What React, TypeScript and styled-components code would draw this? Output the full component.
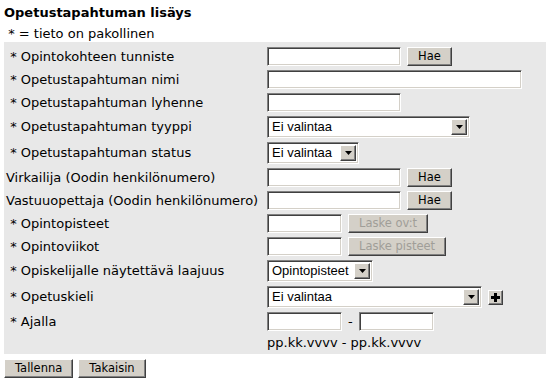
import React from 'react'
import styled, { createGlobalStyle, css } from 'styled-components'

const GlobalStyle = createGlobalStyle`
  html, body {
    margin: 0;
    padding: 0;
    background: #ffffff;
  }
  body {
    font-family: 'DejaVu Sans', Verdana, sans-serif;
    font-size: 13px;
    color: #000000;
  }
`

const inset = css`
  border: 1px solid;
  border-color: #808080 #ffffff #ffffff #808080;
  box-shadow: inset 1px 1px 0 #404040, inset -1px -1px 0 #d4d0c8;
`

const outset = css`
  border: 1px solid;
  border-color: #ffffff #404040 #404040 #ffffff;
  box-shadow: inset -1px -1px 0 #808080;
`

const Page = styled.div`
  padding: 4px 0 0 4px;
`

const Title = styled.h1`
  margin: 0;
  font-size: 13px;
  font-weight: bold;
  line-height: 18px;
`

const Note = styled.p`
  margin: 0;
  padding-top: 4px;
  line-height: 16px;
`

const Panel = styled.div`
  background: #e8e8e8;
  padding: 3px 0 1px 0;
  display: grid;
  grid-template-columns: 261px 1fr;
  align-items: center;
`

const Label = styled.div`
  padding: 2px;
  line-height: 16px;
  white-space: nowrap;
`

const Field = styled.div`
  padding: 2px;
  display: flex;
  align-items: center;
  gap: 6px;
  line-height: 16px;
`

const TextInput = styled.input<{ $w: number }>`
  ${inset};
  box-sizing: border-box;
  width: ${({ $w }) => $w}px;
  height: 19px;
  margin: 0;
  padding: 1px 3px;
  background: #ffffff;
  font-family: 'Liberation Sans', Arial, sans-serif;
  font-size: 13px;
  outline: none;
`

const Button = styled.button`
  ${outset};
  box-sizing: border-box;
  height: 19px;
  margin: 0;
  padding: 0 10px;
  background: #d4d0c8;
  font-family: 'DejaVu Sans', Verdana, sans-serif;
  font-size: 11.5px;
  color: #000000;
  line-height: 15px;

  &:disabled {
    color: #a09e98;
  }
`

const SelectBox = styled.div<{ $w: number }>`
  ${inset};
  box-sizing: border-box;
  width: ${({ $w }) => $w}px;
  height: 22px;
  padding: 2px;
  background: #ffffff;
  display: flex;
  align-items: stretch;
  font-family: 'Liberation Sans', Arial, sans-serif;
  font-size: 13px;
`

const SelectValue = styled.span`
  flex: 1;
  padding-left: 2px;
  line-height: 16px;
  white-space: nowrap;
  overflow: hidden;
`

const SelectArrow = styled.span`
  ${outset};
  box-sizing: border-box;
  width: 16px;
  background: #d4d0c8;
  display: flex;
  align-items: center;
  justify-content: center;
`

const PlusButton = styled.span`
  ${outset};
  box-sizing: border-box;
  width: 15px;
  height: 15px;
  background: #d4d0c8;
  display: flex;
  align-items: center;
  justify-content: center;
`

const Hint = styled.span`
  line-height: 16px;
`

const Actions = styled.div`
  display: flex;
  gap: 5px;
  margin-top: 5px;
`

const Arrow = () => (
  <svg width="7" height="4" viewBox="0 0 7 4">
    <path d="M0 0h7L3.5 4z" fill="#000" />
  </svg>
)

const Select = ({ value, w }: { value: string; w: number }) => (
  <SelectBox $w={w} role="combobox">
    <SelectValue>{value}</SelectValue>
    <SelectArrow>
      <Arrow />
    </SelectArrow>
  </SelectBox>
)

const req = (text: string) => `\u00a0* ${text}`

const App = () => (
  <Page>
    <GlobalStyle />
    <Title>Opetustapahtuman lisäys</Title>
    <Note>{req('= tieto on pakollinen')}</Note>
    <Panel>
      <Label>{req('Opintokohteen tunniste')}</Label>
      <Field>
        <TextInput $w={134} />
        <Button>Hae</Button>
      </Field>

      <Label>{req('Opetustapahtuman nimi')}</Label>
      <Field>
        <TextInput $w={255} />
      </Field>

      <Label>{req('Opetustapahtuman lyhenne')}</Label>
      <Field>
        <TextInput $w={134} />
      </Field>

      <Label>{req('Opetustapahtuman tyyppi')}</Label>
      <Field>
        <Select value="Ei valintaa" w={203} />
      </Field>

      <Label>{req('Opetustapahtuman status')}</Label>
      <Field>
        <Select value="Ei valintaa" w={92} />
      </Field>

      <Label>Virkailija (Oodin henkilönumero)</Label>
      <Field>
        <TextInput $w={134} />
        <Button>Hae</Button>
      </Field>

      <Label>Vastuuopettaja (Oodin henkilönumero)</Label>
      <Field>
        <TextInput $w={134} />
        <Button>Hae</Button>
      </Field>

      <Label>{req('Opintopisteet')}</Label>
      <Field>
        <TextInput $w={75} />
        <Button disabled>Laske ov:t</Button>
      </Field>

      <Label>{req('Opintoviikot')}</Label>
      <Field>
        <TextInput $w={75} />
        <Button disabled>Laske pisteet</Button>
      </Field>

      <Label>{req('Opiskelijalle näytettävä laajuus')}</Label>
      <Field>
        <Select value="Opintopisteet" w={106} />
      </Field>

      <Label>{req('Opetuskieli')}</Label>
      <Field>
        <Select value="Ei valintaa" w={215} />
        <PlusButton>
          <svg width="9" height="9" viewBox="0 0 9 9">
            <path d="M3 0h3v3h3v3H6v3H3V6H0V3h3z" fill="#000" />
          </svg>
        </PlusButton>
      </Field>

      <Label>{req('Ajalla')}</Label>
      <Field>
        <TextInput $w={75} />
        <span>-</span>
        <TextInput $w={75} />
      </Field>

      <Label />
      <Field>
        <Hint>pp.kk.vvvv - pp.kk.vvvv</Hint>
      </Field>
    </Panel>
    <Actions>
      <Button>Tallenna</Button>
      <Button>Takaisin</Button>
    </Actions>
  </Page>
)

export default App
